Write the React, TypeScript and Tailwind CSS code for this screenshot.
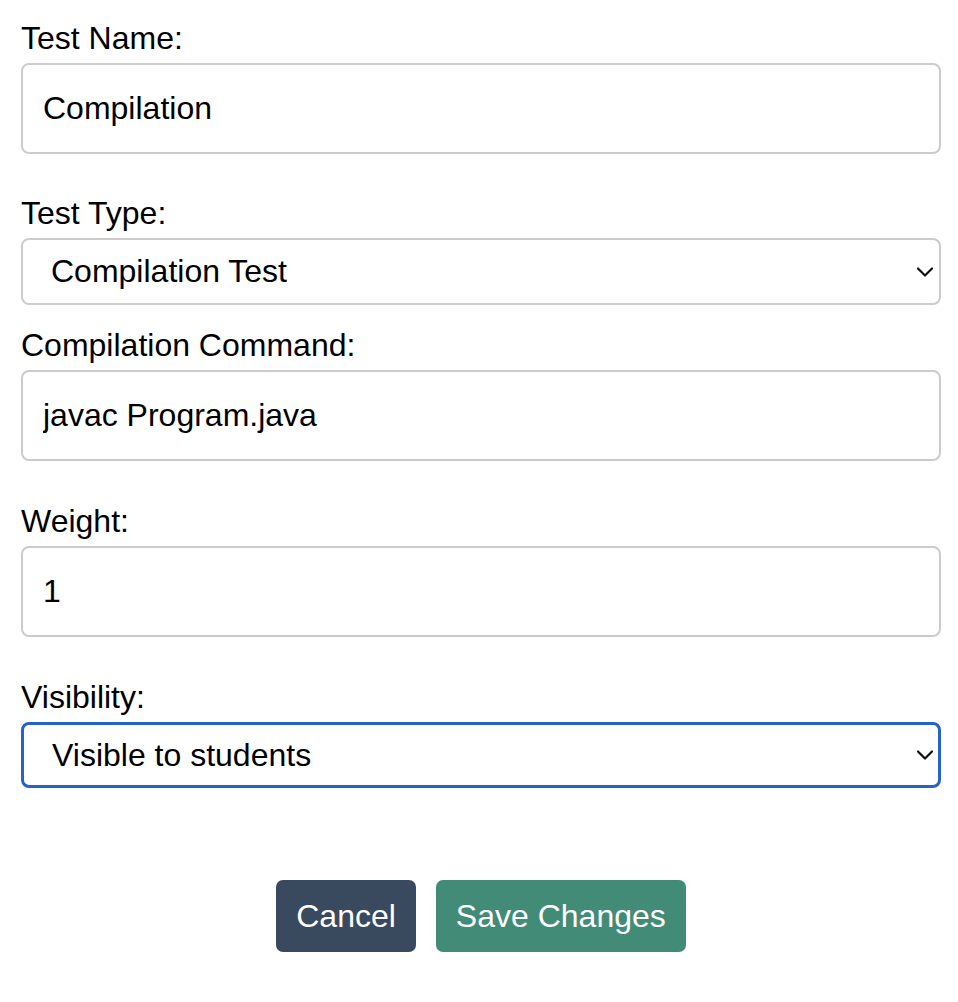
import { ChangeEvent, useState } from "react";

function Chevron() {
  return (
    <svg
      className="pointer-events-none absolute right-[8px] top-1/2 -translate-y-1/2"
      width="16"
      height="10"
      viewBox="0 0 16 10"
      fill="none"
    >
      <path d="M1 1.5 L8 8.5 L15 1.5" stroke="#111" strokeWidth="2.2" strokeLinecap="round" strokeLinejoin="round" />
    </svg>
  );
}

export default function App() {
  const [name, setName] = useState("Compilation");
  const [type, setType] = useState("compilation");
  const [command, setCommand] = useState("javac Program.java");
  const [weight, setWeight] = useState("1");
  const [visibility, setVisibility] = useState("visible");

  const inputCls =
    "mb-[41px] block h-[91px] w-full rounded-[8px] border-2 border-[#cccccc] bg-white px-[20px] text-[32px] leading-[37px] text-black outline-none";
  const selectCls =
    "block w-full appearance-none rounded-[8px] bg-white pl-[28px] pr-[40px] text-[32px] leading-[37px] text-black outline-none";

  return (
    <div className="min-h-screen bg-white pl-[21px] pr-[17px] pt-[20px] font-['Liberation_Sans',Arial,sans-serif] text-[32px] leading-[37px] text-black">
      <label className="mb-[6px] block">Test Name:</label>
      <input
        className={inputCls}
        value={name}
        onChange={(e: ChangeEvent<HTMLInputElement>) => setName(e.target.value)}
      />

      <label className="mb-[6px] block">Test Type:</label>
      <div className="relative mb-[22px]">
        <select
          className={`${selectCls} h-[67px] border-2 border-[#cccccc]`}
          value={type}
          onChange={(e) => setType(e.target.value)}
        >
          <option value="compilation">Compilation Test</option>
          <option value="output">Output Test</option>
          <option value="unit">Unit Test</option>
        </select>
        <Chevron />
      </div>

      <label className="mb-[6px] block">Compilation Command:</label>
      <input
        className={`${inputCls} !mb-[42px]`}
        value={command}
        onChange={(e) => setCommand(e.target.value)}
      />

      <label className="mb-[6px] block">Weight:</label>
      <input
        className={`${inputCls} !mb-[42px]`}
        value={weight}
        onChange={(e) => setWeight(e.target.value)}
      />

      <label className="mb-[6px] block">Visibility:</label>
      <div className="relative">
        <select
          className={`${selectCls} h-[66px] border-[3px] border-[#2563c7]`}
          value={visibility}
          onChange={(e) => setVisibility(e.target.value)}
        >
          <option value="visible">Visible to students</option>
          <option value="hidden">Hidden from students</option>
        </select>
        <Chevron />
      </div>

      <div className="mt-[92px] flex justify-center gap-[20px]">
        <button className="h-[72px] rounded-[7px] bg-[#3a4a5e] px-[20px] text-[32px] text-white">
          Cancel
        </button>
        <button className="h-[72px] rounded-[7px] bg-[#428b77] px-[20px] text-[32px] text-white">
          Save Changes
        </button>
      </div>
    </div>
  );
}
